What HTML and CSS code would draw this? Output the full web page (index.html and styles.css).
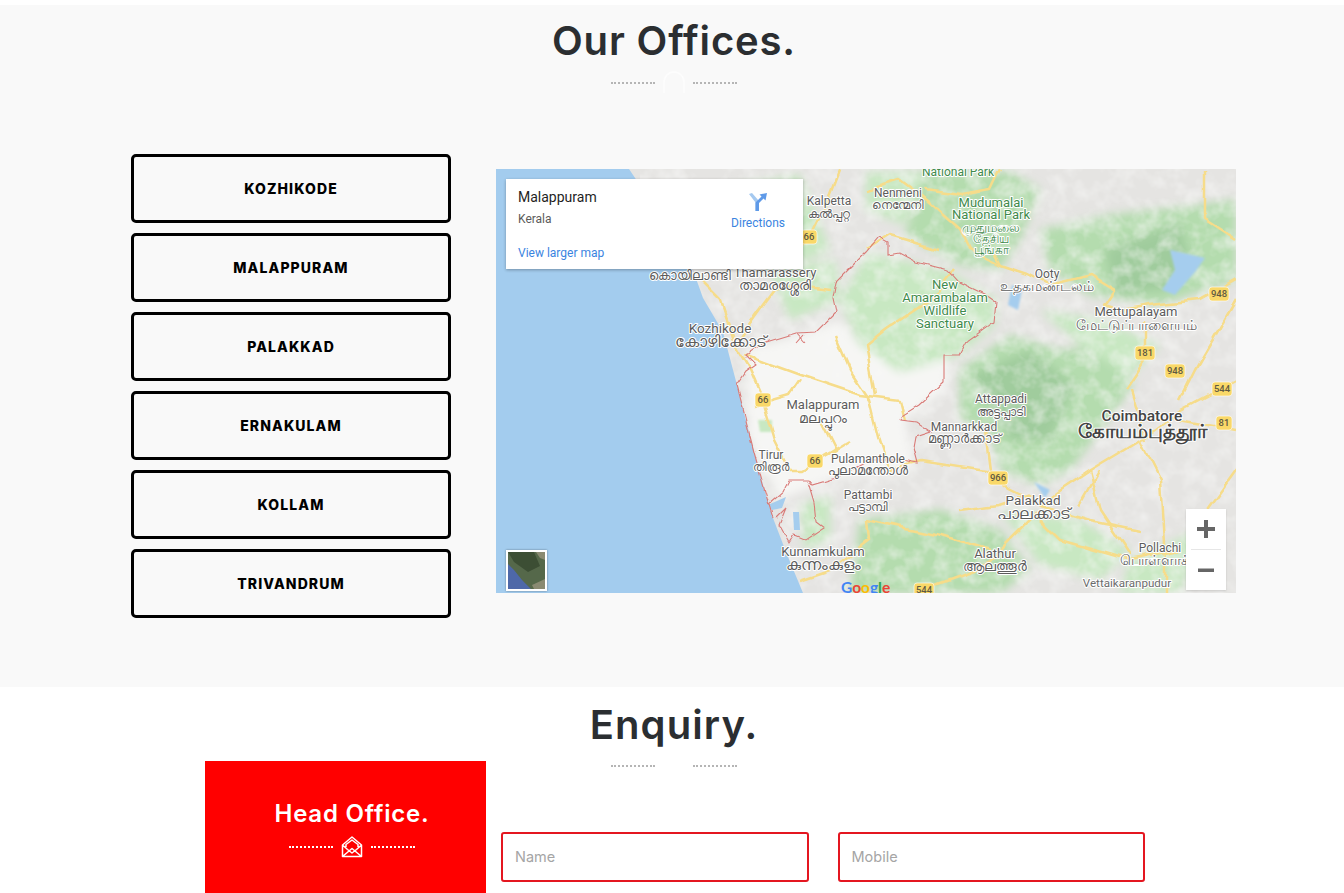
FILE: index.html
```html
<!DOCTYPE html>
<html lang="en">
<head>
<meta charset="utf-8">
<title>Our Offices</title>
<link rel="stylesheet" href="styles.css">
</head>
<body>
<section class="offices">
  <div class="title">
    <h2>Our Offices.</h2>
    <div class="rule">
      <span class="dots"></span>
      <svg class="rule-icon" viewBox="0 0 24 24"><path d="M2 22V11a10 10 0 0 1 20 0v11"/></svg>
      <span class="dots"></span>
    </div>
  </div>
  <div class="offices-row">
    <div class="branches">
      <button class="branch">KOZHIKODE</button>
      <button class="branch">MALAPPURAM</button>
      <button class="branch">PALAKKAD</button>
      <button class="branch">ERNAKULAM</button>
      <button class="branch">KOLLAM</button>
      <button class="branch">TRIVANDRUM</button>
    </div>
    <div class="map">
      <svg class="map-canvas" viewBox="0 0 740 424" width="740" height="424">
        <defs>
          <filter id="soft" x="-10%" y="-10%" width="120%" height="120%"><feGaussianBlur stdDeviation="5"/></filter>
          <filter id="softer" x="-10%" y="-10%" width="120%" height="120%"><feGaussianBlur stdDeviation="1.200"/></filter>
          <filter id="wiggle" x="-2%" y="-2%" width="104%" height="104%">
            <feTurbulence type="fractalNoise" baseFrequency="0.035" numOctaves="2" seed="4" result="n"/>
            <feDisplacementMap in="SourceGraphic" in2="n" scale="9" xChannelSelector="R" yChannelSelector="G"/>
            <feGaussianBlur stdDeviation="0.400"/>
          </filter>
          <filter id="jag" x="-2%" y="-2%" width="104%" height="104%">
            <feTurbulence type="fractalNoise" baseFrequency="0.09" numOctaves="2" seed="9" result="n"/>
            <feDisplacementMap in="SourceGraphic" in2="n" scale="4" xChannelSelector="R" yChannelSelector="G"/>
            <feGaussianBlur stdDeviation="0.350"/>
          </filter>
          <filter id="mottle" x="0" y="0" width="100%" height="100%">
            <feTurbulence type="fractalNoise" baseFrequency="0.06" numOctaves="3" seed="7"/>
            <feColorMatrix type="matrix" values="0 0 0 0 0.93  0 0 0 0 0.93  0 0 0 0 0.92  1.300 0 0 0 -0.520"/>
          </filter>
        </defs>
        <g transform="translate(-496 -169)">
          <rect class="land" x="496" y="169" width="740" height="424"/>
          <g filter="url(#soft)">
            <path class="green-m" d="M925 172L1010 172L1040 190L1020 240L1000 270L960 265L905 235z"/>
            <path class="green-l" d="M866 172L925 172L905 225L866 210z"/>
            <path class="green-m" d="M1040 230L1110 215L1200 205L1236 200L1236 280L1160 305L1090 295L1050 270z"/>
            <path class="green-d" d="M1105 250L1180 222L1190 260L1165 290L1115 295z"/>
            <path class="green-m" d="M960 370L1010 335L1060 350L1120 345L1133 385L1100 430L1070 470L1040 485L1000 470L990 430L960 420z"/>
            <path class="green-d" d="M970 375L1030 350L1075 385L1050 440L1010 440z"/>
            <path class="green-l" d="M1040 310L1100 320L1160 345L1130 375L1080 345z"/>
            <path class="green-m" d="M860 520L940 510L1000 530L1030 570L1000 593L850 593z"/>
            <path class="green-l" d="M1000 510L1080 520L1130 550L1100 580L1040 565z"/>
            <path class="green-l" d="M1130 560L1200 530L1180 593L1120 593z"/>
            <path class="green-l" d="M715 190L800 175L830 250L780 270L730 260z"/>
            <path class="green-l" d="M770 270L835 260L840 300L790 320z"/>
            <path class="green-l" d="M800 505L830 495L830 540L805 550z"/>
            <path class="plain" d="M745 350L800 335L840 320L860 345L950 360L945 390L905 420L915 470L830 480L780 500L750 440z"/>
            <path class="green-l" d="M840 300L868 252L950 272L996 300L995 325L960 355L900 372L860 345z"/>
          </g>
          <rect x="640" y="169" width="596" height="424" filter="url(#mottle)" class="mottle"/>
          <g filter="url(#softer)">
            <path class="water" d="M1170 250L1205 258L1195 272L1175 295L1162 290L1175 270z"/>
            <path class="water" d="M1034 482L1050 490L1045 498z"/>
            <path class="water" d="M1012 285L1022 290L1018 310L1008 305z"/>
            <path class="green-l" d="M758 420L772 420L772 432L760 432z"/>
          </g>
          <path class="sea" d="M496 169H629L656 209L693 270L703 298L723 332L737 385L754 452L763 485L773 518L786 552L803 593H496z"/>
          <path class="water" d="M768 505L786 497L782 508L772 510z"/>
          <path class="water" d="M793 512L799 512L800 530L794 530z"/>
          <g class="roads" filter="url(#wiggle)">
            <polyline points="700,280 720,300 735,345 750,370 763,400 775,440 790,470 800,470 815,461 850,440"/>
            <polyline points="735,345 760,310 775,290 790,285 830,290"/>
            <polyline points="745,355 800,375 830,385 860,395 900,400 905,420"/>
            <polyline points="755,405 790,395 800,380"/>
            <polyline points="835,335 850,370 870,400 880,440 890,470"/>
            <polyline points="820,420 835,450 815,461"/>
            <polyline points="1140,440 1090,470 1060,490 1040,505 1010,490 985,470 920,460 880,470"/>
            <polyline points="1140,440 1160,480 1165,560 1165,593"/>
            <polyline points="1140,440 1180,410 1236,380"/>
            <polyline points="1130,390 1145,440"/>
            <polyline points="1236,430 1180,420"/>
            <polyline points="1236,470 1200,520"/>
            <polyline points="1040,510 1010,540 980,570 924,590"/>
            <polyline points="1040,520 1060,540 1130,560 1180,550"/>
            <polyline points="1090,470 1100,510 1130,555"/>
            <polyline points="992,250 1000,265 1030,275 1050,285 1090,275 1115,290 1105,305 1120,310 1150,305 1200,300 1236,280"/>
            <polyline points="866,190 900,180 920,195 960,230 970,250 1000,265"/>
            <polyline points="1000,169 990,190 960,195 925,190"/>
            <polyline points="1205,170 1205,220 1236,240"/>
            <polyline points="1145,320 1145,360 1125,390"/>
            <polyline points="1236,300 1195,370 1180,400"/>
            <polyline points="840,169 830,195 808,240 800,250"/>
            <polyline points="866,250 890,235 940,250"/>
            <polyline points="955,270 930,300 885,330 866,345 875,395"/>
            <polyline points="985,430 990,470"/>
            <polyline points="958,510 1000,505 1030,495"/>
            <polyline points="868,520 940,535 990,550"/>
            <polyline points="800,580 830,570 870,540 868,520"/>
            <polyline points="1040,505 1090,520 1140,530"/>
            <polyline points="1080,505 1100,470"/>
          </g>
          <g class="border" filter="url(#jag)">
            <polyline points="737,385 754,452 763,485 773,518"/>
            <polyline points="737,385 746,372 756,365 746,355 763,343 796,333 816,332 836,312 833,298 836,282 866,252 879,237 888,242 888,255 899,253 916,262 948,270 959,282 986,295 996,302 994,322 966,342 959,355 944,355 944,382 919,405 903,415 901,420 916,422 931,432 916,437 914,448 918,463 903,460 870,460 836,478 812,485 808,480 789,480 783,492 768,505"/>
            <polyline points="808,482 814,502 816,522 824,528 806,540 794,535 789,543 779,525 786,508 776,518"/>
            <path d="M796 333L805 343M796 343L803 335"/>
          </g>
          <g class="lbl">
            <text x="829" y="205">Kalpetta</text>
            <text x="829" y="218">കൽപ്പറ്റ</text>
            <text x="898" y="197">Nenmeni</text>
            <text x="898" y="209">നെന്മേനി</text>
            <text class="s13" x="775" y="277">Thamarassery</text>
            <text class="s14" x="775" y="290">താമരശ്ശേരി</text>
            <text class="s13" x="690" y="280">കൊയിലാണ്ടി</text>
            <text class="s135" x="720" y="333">Kozhikode</text>
            <text class="s155" x="720" y="347">കോഴിക്കോട്</text>
            <text x="1047" y="278">Ooty</text>
            <text class="s14" x="1047" y="291">உதகமண்டலம்</text>
            <text class="s13" x="1136" y="316">Mettupalayam</text>
            <text class="s14" x="1136" y="330">மேட்டுப்பாளையம்</text>
            <text class="s13" x="823" y="409">Malappuram</text>
            <text class="s14" x="823" y="423">മലപ്പുറം</text>
            <text x="771" y="459">Tirur</text>
            <text x="771" y="471">തിരൂർ</text>
            <text x="868" y="463">Pulamanthole</text>
            <text class="s13" x="868" y="475">പുലാമന്തോൾ</text>
            <text x="868" y="499">Pattambi</text>
            <text x="868" y="511">പട്ടാമ്പി</text>
            <text class="s13" x="823" y="556">Kunnamkulam</text>
            <text class="s155" x="823" y="570">കുന്നംകുളം</text>
            <text x="1001" y="403">Attappadi</text>
            <text x="1001" y="416">അട്ടപ്പാടി</text>
            <text x="964" y="431">Mannarkkad</text>
            <text class="s13" x="964" y="443">മണ്ണാർക്കാട്</text>
            <text class="s135" x="1033" y="505">Palakkad</text>
            <text class="s155" x="1033" y="519">പാലക്കാട്</text>
            <text class="s13" x="995" y="558">Alathur</text>
            <text class="s14" x="995" y="571">ആലത്തൂർ</text>
            <text x="1160" y="552">Pollachi</text>
            <text class="s14" x="1160" y="565">பொள்ளாச்சி</text>
            <text class="lbl-sm" x="1127" y="587">Vettaikaranpudur</text>
            <text class="lbl-city" x="1142" y="421">Coimbatore</text>
            <text class="lbl-city-alt" x="1142" y="438">கோயம்புத்தூர்</text>
          </g>
          <g class="lbl lbl-green">
            <text x="958" y="176">National Park</text>
            <text class="s13" x="991" y="207">Mudumalai</text>
            <text class="s13" x="991" y="219">National Park</text>
            <text class="s13" x="991" y="232">முதுமலை</text>
            <text x="991" y="243">தேசிய</text>
            <text x="991" y="254">பூங்கா</text>
            <text class="s13" x="945" y="289">New</text>
            <text class="s13" x="945" y="302">Amarambalam</text>
            <text class="s13" x="945" y="315">Wildlife</text>
            <text class="s13" x="945" y="328">Sanctuary</text>
          </g>
          <g class="shields">
            <g transform="translate(809 237)"><rect x="-8" y="-7" width="16" height="14" rx="3"/><text y="3">66</text></g>
            <g transform="translate(1219 294)"><rect x="-10" y="-7" width="20" height="14" rx="3"/><text y="3">948</text></g>
            <g transform="translate(1145 353)"><rect x="-10" y="-7" width="20" height="14" rx="3"/><text y="3">181</text></g>
            <g transform="translate(1175 371)"><rect x="-10" y="-7" width="20" height="14" rx="3"/><text y="3">948</text></g>
            <g transform="translate(1222 389)"><rect x="-10" y="-7" width="20" height="14" rx="3"/><text y="3">544</text></g>
            <g transform="translate(1224 423)"><rect x="-8" y="-7" width="16" height="14" rx="3"/><text y="3">81</text></g>
            <g transform="translate(763 400)"><rect x="-8" y="-7" width="16" height="14" rx="3"/><text y="3">66</text></g>
            <g transform="translate(815 461)"><rect x="-8" y="-7" width="16" height="14" rx="3"/><text y="3">66</text></g>
            <g transform="translate(998 478)"><rect x="-10" y="-7" width="20" height="14" rx="3"/><text y="3">966</text></g>
            <g transform="translate(924 590)"><rect x="-10" y="-7" width="20" height="14" rx="3"/><text y="3">544</text></g>
          </g>
          <text class="g-logo" x="841" y="593"><tspan class="g-b">G</tspan><tspan class="g-r">o</tspan><tspan class="g-y">o</tspan><tspan class="g-b">g</tspan><tspan class="g-g">l</tspan><tspan class="g-r">e</tspan></text>
        </g>
      </svg>
      <div class="info">
        <div class="info-main">
          <div class="info-name">Malappuram</div>
          <div class="info-addr">Kerala</div>
          <a class="info-link info-larger">View larger map</a>
        </div>
        <div class="info-dir">
          <svg class="dir-icon" viewBox="0 0 20 20" width="20" height="20">
            <path class="dir-light" d="M1 2l3-1 7 8v10H7.500v-8.500z"/>
            <path class="dir-dark" d="M7.500 19v-8.500l6-6L11.500 2.500 19 1l-1.500 7.500-2-2-4.500 4.500V19z"/>
          </svg>
          <a class="info-link">Directions</a>
        </div>
      </div>
      <div class="thumb">
        <svg viewBox="0 0 37 37" width="37" height="37">
          <rect class="th-land" width="37" height="37"/>
          <path class="th-dark" d="M0 0H26L32 14L20 20L6 10z"/>
          <path class="th-sea" d="M0 12L6 18L14 28L23 37H0z"/>
          <path class="th-tan" d="M28 0H37V8L32 6z"/>
          <path class="th-tan" d="M24 33L37 27V37H26z"/>
        </svg>
      </div>
      <div class="zoom-ctl">
        <div class="zoom-btn"><svg viewBox="0 0 20 20" width="20" height="20"><path d="M1 8h7V1h4v7h7v4h-7v7H8v-7H1z"/></svg></div>
        <div class="zoom-sep"></div>
        <div class="zoom-btn"><svg viewBox="0 0 20 20" width="20" height="20"><path d="M2 8.500h16v3.500H2z"/></svg></div>
      </div>
    </div>
  </div>
</section>
<section class="enquiry">
  <div class="title title-enquiry">
    <h2>Enquiry.</h2>
    <div class="rule">
      <span class="dots"></span>
      <svg class="rule-icon" viewBox="0 0 24 24"><path d="M2 22V11a10 10 0 0 1 20 0v11"/></svg>
      <span class="dots"></span>
    </div>
  </div>
  <div class="enquiry-row">
    <aside class="head-office">
      <h3>Head Office.</h3>
      <div class="rule rule-light">
        <span class="dots"></span>
        <svg class="mail-icon" viewBox="0 0 22 22" width="22" height="22">
          <path d="M1.500 9L11 1l9.500 8v11.500h-19zM1.500 9l5 4.500M20.500 9l-5 4.500M1.500 20.500L11 12.500l9.500 8M5 11V8.500L11 4l6 4.500V11M6.500 13.500L11 17l4.500-3.500"/>
        </svg>
        <span class="dots"></span>
      </div>
    </aside>
    <form class="enquiry-form">
      <input class="field" type="text" placeholder="Name">
      <input class="field" type="text" placeholder="Mobile">
    </form>
  </div>
</section>
</body>
</html>
```
FILE: styles.css
```css
* { box-sizing: border-box; }
html, body { margin: 0; height: 100%; overflow: hidden; }
body {
  padding-top: 5px;
  background: #fff;
  font-family: Inter, "Noto Sans", sans-serif;
  color: #2b2e31;
}
.offices { background: #f9f9f9; height: 682px; }
.enquiry { background: #fff; }

.title { text-align: center; padding-left: 4px; }
.title h2 {
  margin: 0;
  padding-top: 6px;
  font-size: 40px;
  line-height: 60px;
  font-weight: 600;
  letter-spacing: .85px;
}
.rule { display: flex; justify-content: center; align-items: center; gap: 7px; }
.dots { width: 44px; border-top: 2px dotted #b5b5b5; }
.rule-icon { width: 24px; height: 24px; fill: none; stroke: #fff; stroke-width: 1.500; opacity: .75; }

.offices-row { display: flex; gap: 45px; padding: 59px 0 0 131px; }
.branches { width: 320px; display: flex; flex-direction: column; gap: 10px; }
.branch {
  height: 69px;
  background: transparent;
  border: 3px solid #000;
  border-radius: 5px;
  font-family: Inter, sans-serif;
  font-weight: 800;
  font-size: 14px;
  letter-spacing: 1.100px;
  color: #000;
}

.map { position: relative; width: 740px; height: 424px; margin-top: 15px; overflow: hidden; }
.map-canvas { display: block; }
.land { fill: #e5e4e2; }
.plain { fill: #f6f6f4; }
.green-l { fill: #c8e8c2; }
.green-m { fill: #b4dcae; }
.green-d { fill: #a0cc9d; }
.water { fill: #a5cdee; }
.sea { fill: #a3ccee; }
.roads polyline { fill: none; stroke: #f6dc8a; stroke-width: 2.500; stroke-linejoin: round; }
.border polyline, .border path { fill: none; stroke: #d97b78; stroke-width: 1.100; }
.lbl text {
  font-family: Roboto, "Noto Sans", sans-serif;
  font-size: 12px;
  text-anchor: middle;
  fill: #5c5c5c;
  stroke: #fff;
  stroke-width: 2px;
  paint-order: stroke;
  stroke-linejoin: round;
}
.lbl .s13 { font-size: 13px; }
.lbl .s135 { font-size: 13.500px; }
.lbl .s14 { font-size: 14px; }
.lbl .s155 { font-size: 15.500px; }
.lbl .lbl-sm { font-size: 11.600px; fill: #6c6c6c; }
.lbl .lbl-city { font-size: 15.500px; fill: #444; font-weight: 500; }
.lbl .lbl-city-alt { font-size: 19.500px; fill: #444; font-weight: 700; }
.lbl-green text { fill: #3f8a4c; }
.shields rect { fill: #f9d868; stroke: #fff; stroke-width: .6; }
.shields text { font-family: Roboto, sans-serif; font-size: 9.500px; text-anchor: middle; fill: #5f5a42; font-weight: 500; }
.g-logo { font-family: Lato, sans-serif; font-size: 15.500px; font-weight: 700; }
.g-b { fill: #4285f4; }
.g-r { fill: #ea4335; }
.g-y { fill: #fbbc05; }
.g-g { fill: #34a853; }

.info {
  position: absolute;
  left: 10px;
  top: 10px;
  width: 297px;
  height: 90px;
  background: #fff;
  box-shadow: 0 1px 3px rgba(0, 0, 0, .3);
  display: flex;
  justify-content: space-between;
  font-family: Roboto, sans-serif;
  padding: 10px 18px 0 12px;
}
.info-name { font-size: 14px; font-weight: 400; color: #1f1f1f; line-height: 16px; }
.info-addr { font-size: 12px; color: #5b5b5b; line-height: 16px; margin-top: 6px; }
.info-link { font-size: 12px; color: #3a84df; line-height: 16px; display: block; }
.info-larger { margin-top: 18px; }
.info-dir { display: flex; flex-direction: column; align-items: center; gap: 3px; padding-top: 3px; }
.dir-light { fill: #a5c9f0; }
.dir-dark { fill: #5f9ae8; }

.thumb { position: absolute; left: 10px; bottom: 2px; width: 41px; height: 41px; border: 2px solid #fff; box-shadow: 0 0 2px rgba(0, 0, 0, .4); }
.thumb svg { display: block; }
.th-land { fill: #55684a; }
.th-sea { fill: #4e68a8; }
.th-dark { fill: #3c4e34; }
.th-tan { fill: #8a8a72; }

.zoom-ctl { position: absolute; left: 690px; top: 340px; width: 40px; height: 81px; background: #fff; box-shadow: 0 1px 2px rgba(0, 0, 0, .15); display: flex; flex-direction: column; align-items: center; }
.zoom-btn { flex: 1; display: flex; align-items: center; justify-content: center; }
.zoom-btn svg { fill: #666; }
.zoom-sep { width: 30px; height: 1px; background: #e6e6e6; }

.title-enquiry { height: 74px; }
.title-enquiry h2 { padding-top: 8px; letter-spacing: 1.100px; }
.title-enquiry .rule { margin-top: -1px; }
.enquiry-row { display: flex; padding-left: 205px; }
.head-office { width: 281px; height: 320px; background: #f00; color: #fff; padding: 36px 0 0 13px; text-align: center; flex: none; }
.head-office h3 { margin: 0; font-size: 24px; line-height: 33px; font-weight: 600; letter-spacing: .8px; }
.rule-light { gap: 8px; margin-top: 6px; }
.rule-light .dots { border-top-color: #fff; }
.mail-icon { fill: none; stroke: #fff; stroke-width: 1.500; stroke-linejoin: round; }
.enquiry-form { display: flex; gap: 29px; padding: 71px 0 0 15px; align-items: flex-start; }
.field {
  width: 307.500px;
  height: 50px;
  border: 2px solid #e41620;
  border-radius: 3px;
  padding: 0 12px 2px;
  font-family: Inter, sans-serif;
  font-size: 14.500px;
  background: #fff;
  outline: none;
}
.field::placeholder { color: #a5a5a5; opacity: 1; }
```
